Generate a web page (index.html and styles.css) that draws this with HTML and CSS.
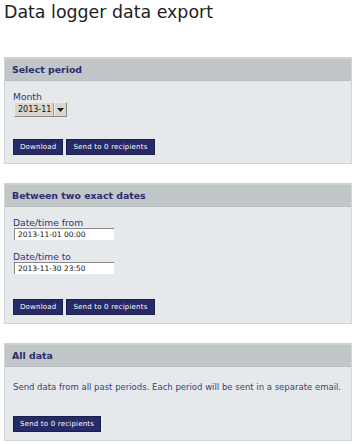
FILE: index.html
```html
<!DOCTYPE html>
<html>
<head>
<meta charset="utf-8">
<link rel="stylesheet" href="styles.css">
</head>
<body>
<h1 class="title">Data logger data export</h1>

<section class="panel panel-first">
  <div class="panel-head">Select period</div>
  <div class="panel-body">
    <div class="field">
      <div class="label">Month</div>
      <div class="select"><span class="select-val">2013-11</span><span class="select-arrow"><svg width="7" height="4" viewBox="0 0 7 4"><path d="M0 0H7L3.5 4Z" fill="#222"/></svg></span></div>
    </div>
    <div class="actions">
      <button class="btn">Download</button>
      <button class="btn">Send to 0 recipients</button>
    </div>
  </div>
</section>

<section class="panel">
  <div class="panel-head">Between two exact dates</div>
  <div class="panel-body">
    <div class="field">
      <div class="label">Date/time from</div>
      <div class="input">2013-11-01 00:00</div>
    </div>
    <div class="field field-second">
      <div class="label">Date/time to</div>
      <div class="input">2013-11-30 23:50</div>
    </div>
    <div class="actions actions-wide">
      <button class="btn">Download</button>
      <button class="btn">Send to 0 recipients</button>
    </div>
  </div>
</section>

<section class="panel">
  <div class="panel-head">All data</div>
  <div class="panel-body">
    <p class="text">Send data from all past periods. Each period will be sent in a separate email.</p>
    <div class="actions actions-last">
      <button class="btn">Send to 0 recipients</button>
    </div>
  </div>
</section>
</body>
</html>
```
FILE: styles.css
```css
html, body {
  margin: 0;
  padding: 0;
  background: #ffffff;
}
body {
  padding: 0 3px 0 4px;
  font-family: "DejaVu Sans", "Liberation Sans", sans-serif;
}
.title {
  margin: 0;
  padding-top: 1px;
  font-size: 17.4px;
  font-weight: normal;
  line-height: 22px;
  color: #222;
}
.panel {
  margin-top: 19px;
  border: 1px solid #d3d6d8;
  border-top: 2px solid #cfd2d4;
  background: #e6e9ec;
}
.panel-first {
  margin-top: 34px;
}
.panel-head {
  background: #c1c6c9;
  height: 21px;
  line-height: 21px;
  padding: 0 7px;
  font-size: 9.4px;
  font-weight: bold;
  color: #2a2d6c;
  border-bottom: 1px solid #b8bdc0;
}
.panel-body {
  padding: 10px 8px 8px 8px;
}
.label {
  font-size: 9.2px;
  line-height: 11px;
  color: #2f3477;
}
.select {
  display: flex;
  width: max-content;
  align-items: stretch;
  margin-left: 1px;
  height: 13px;
  background: #d9d7cc;
  border: 1px solid #efeee9;
  border-right-color: #8c8a80;
  border-bottom-color: #8c8a80;
  font-size: 8px;
  color: #111;
}
.select-val {
  padding: 0 2px 0 3px;
  line-height: 13px;
  border-right: 1px solid #999;
}
.select-arrow {
  width: 11px;
  display: flex;
  align-items: center;
  justify-content: center;
  border-left: 1px solid #f4f3ef;
}
.input {
  margin-left: 1px;
  width: 96px;
  height: 11px;
  line-height: 11px;
  padding-left: 3px;
  background: #fff;
  border-top: 1px solid #888;
  border-left: 1px solid #888;
  font-size: 7.5px;
  color: #111;
}
.field-second {
  margin-top: 11px;
}
.actions {
  display: flex;
  gap: 3px;
  margin-top: 22px;
}
.actions-wide {
  margin-top: 25px;
}
.actions-last {
  margin-top: 23px;
}
.btn {
  margin: 0;
  padding: 0 6px;
  height: 16px;
  background: #262a66;
  color: #fff;
  border: 1px solid #1b1e4a;
  font-family: "DejaVu Sans", "Liberation Sans", sans-serif;
  font-size: 7px;
  letter-spacing: 0.2px;
  line-height: 14px;
}
.text {
  margin: 5px 0 0 0;
  font-size: 8.5px;
  line-height: 11px;
  color: #3a3f78;
}
```
